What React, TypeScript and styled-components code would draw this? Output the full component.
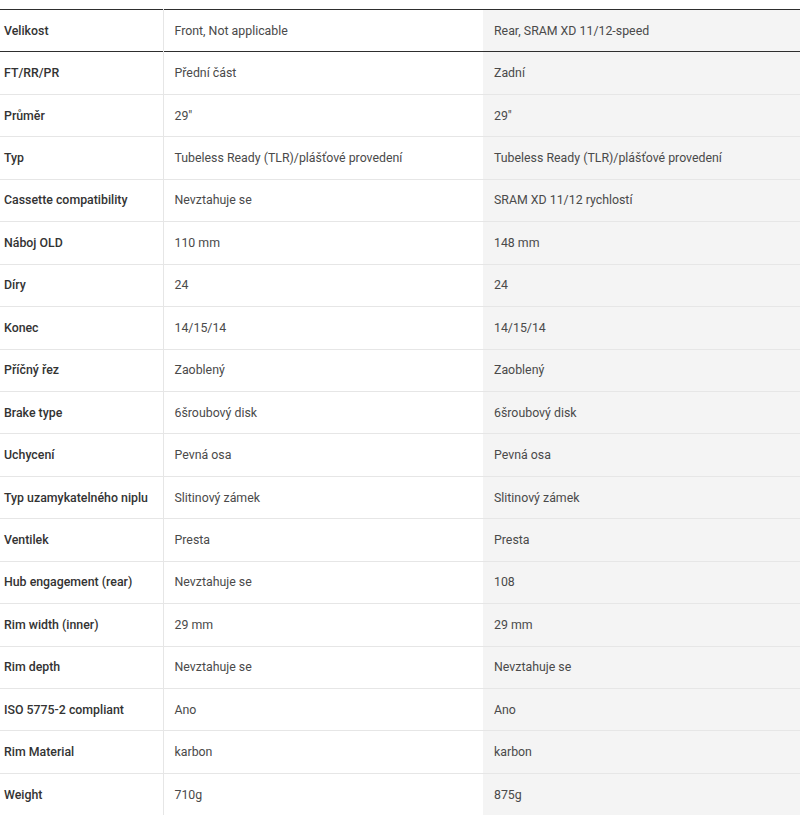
import React from "react";
import styled, { createGlobalStyle } from "styled-components";

const Global = createGlobalStyle`
  html, body { margin: 0; padding: 0; background: #ffffff; }
  body { font-family: Roboto, "Liberation Sans", Arial, sans-serif; }
`;

const Wrap = styled.div`
  padding-top: 9px;
  width: 800px;
`;

const Table = styled.table`
  width: 800px;
  border-collapse: collapse;
  table-layout: fixed;
  border-top: 1px solid #2e2e2e;
  font-size: 12.35px;
`;

const Row = styled.tr<{ $head?: boolean }>`
  height: 42.45px;
  border-bottom: 1px solid ${(p) => (p.$head ? "#2e2e2e" : "#e6e6e6")};
`;

const Label = styled.th`
  text-align: left;
  font-weight: 500;
  color: #333333;
  padding: 0 0 0 4px;
  border-right: 1px solid #e6e6e6;
  vertical-align: middle;
  white-space: nowrap;
`;

const Cell = styled.td<{ $shade?: boolean }>`
  padding: 0 0 0 11px;
  color: #4a4a4a;
  font-weight: 400;
  vertical-align: middle;
  background: ${(p) => (p.$shade ? "#f4f4f4" : "transparent")};
  white-space: nowrap;
`;

const rows: [string, string, string][] = [
  ["Velikost", "Front, Not applicable", "Rear, SRAM XD 11/12-speed"],
  ["FT/RR/PR", "Přední část", "Zadní"],
  ["Průměr", "29\"", "29\""],
  ["Typ", "Tubeless Ready (TLR)/plášťové provedení", "Tubeless Ready (TLR)/plášťové provedení"],
  ["Cassette compatibility", "Nevztahuje se", "SRAM XD 11/12 rychlostí"],
  ["Náboj OLD", "110 mm", "148 mm"],
  ["Díry", "24", "24"],
  ["Konec", "14/15/14", "14/15/14"],
  ["Příčný řez", "Zaoblený", "Zaoblený"],
  ["Brake type", "6šroubový disk", "6šroubový disk"],
  ["Uchycení", "Pevná osa", "Pevná osa"],
  ["Typ uzamykatelného niplu", "Slitinový zámek", "Slitinový zámek"],
  ["Ventilek", "Presta", "Presta"],
  ["Hub engagement (rear)", "Nevztahuje se", "108"],
  ["Rim width (inner)", "29 mm", "29 mm"],
  ["Rim depth", "Nevztahuje se", "Nevztahuje se"],
  ["ISO 5775-2 compliant", "Ano", "Ano"],
  ["Rim Material", "karbon", "karbon"],
  ["Weight", "710g", "875g"],
];

export default function App() {
  return (
    <>
      <Global />
      <Wrap>
        <Table>
          <colgroup>
            <col style={{ width: 163 }} />
            <col style={{ width: 320 }} />
            <col />
          </colgroup>
          <tbody>
            {rows.map(([l, a, b], i) => (
              <Row key={l} $head={i === 0}>
                <Label>{l}</Label>
                <Cell>{a}</Cell>
                <Cell $shade>{b}</Cell>
              </Row>
            ))}
          </tbody>
        </Table>
      </Wrap>
    </>
  );
}
